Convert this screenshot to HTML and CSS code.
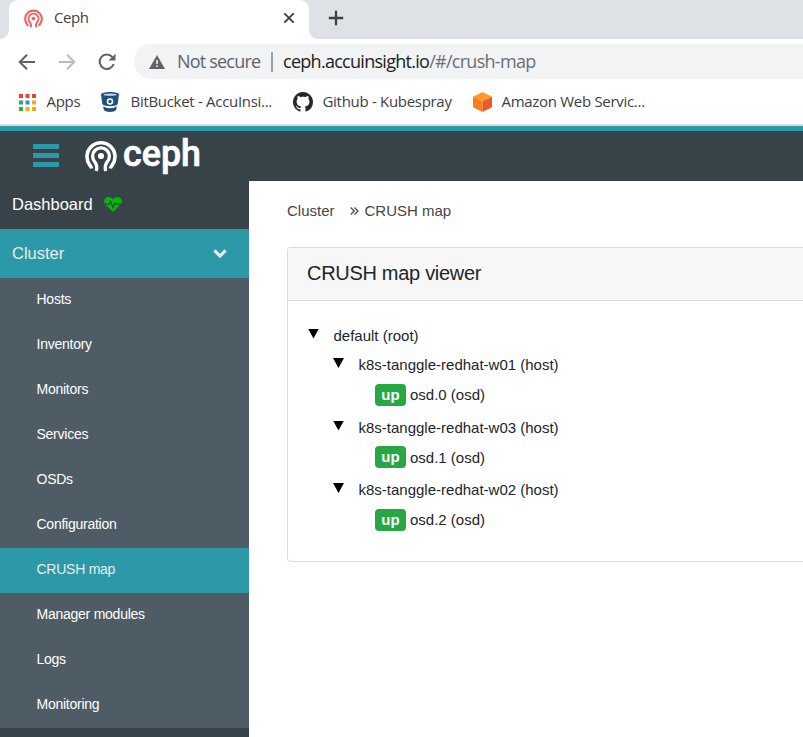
FILE: index.html
```html
<!DOCTYPE html>
<html lang="en">
<head>
<meta charset="utf-8">
<title>Ceph</title>
<link rel="stylesheet" href="styles.css">
</head>
<body>
<svg width="0" height="0" class="defs" aria-hidden="true">
  <symbol id="ceph-mark" viewBox="0 0 32 32">
    <g fill="none" stroke="currentColor" stroke-linecap="butt">
      <path stroke-width="3.600" d="M6.700 28.500C6.500 27.500 5.800 26.400 4.800 25.100A14 14 0 1 1 27.200 25.100C26.200 26.400 25.500 27.500 25.300 28.500"/>
      <path stroke-width="3.300" d="M11.200 31C12.300 28.300 12.200 25.600 9.900 22A8.400 8.400 0 1 1 22.100 22C19.800 25.600 19.700 28.300 20.800 31"/>
    </g>
    <circle cx="16" cy="16" r="3.100" fill="currentColor"/>
  </symbol>
</svg>
<header class="browser">
  <div class="tabs">
    <div class="tab-prev"></div>
    <div class="tab">
      <svg class="favicon" width="19" height="19"><use href="#ceph-mark"/></svg>
      <span class="tab-title">Ceph</span>
      <svg class="close" width="12" height="12" viewBox="0 0 12 12"><path d="M1.300 1.300 10.700 10.700M10.700 1.300 1.300 10.700" stroke="#3c4043" stroke-width="1.900"/></svg>
    </div>
    <div class="tab-rest"><svg width="16" height="16" viewBox="0 0 16 16"><path d="M8 .8V15.200M.8 8H15.200" stroke="#3c4043" stroke-width="2.300"/></svg></div>
  </div>
  <div class="toolbar">
    <svg class="nav-icon" width="18" height="18" viewBox="0 0 18 18" fill="none" stroke="#5f6368" stroke-width="2"><path d="M17 9H2M9 1.700 1.700 9 9 16.300"/></svg>
    <svg class="nav-icon" width="18" height="18" viewBox="0 0 18 18" fill="none" stroke="#babcbe" stroke-width="2"><path d="M1 9H16M9 1.700 16.300 9 9 16.300"/></svg>
    <svg class="nav-icon" width="18" height="18" viewBox="0 0 18 18"><path d="M15.700 11A7.200 7.200 0 1 1 14.300 4" fill="none" stroke="#5f6368" stroke-width="2.100"/><path d="M17.500.7V7.500H10.500Z" fill="#5f6368"/></svg>
    <div class="omnibox">
      <svg width="16" height="14" viewBox="0 0 16 14"><path d="M8 0 16 14H0Z" fill="#5f6368"/><path d="M8 5V9M8 10.300V12" stroke="#f1f3f4" stroke-width="1.600"/></svg>
      <span class="insecure">Not secure</span>
      <span class="sep"></span>
      <span class="url">ceph.accuinsight.io<span class="path">/#/crush-map</span></span>
    </div>
  </div>
  <nav class="bookmarks">
    <svg class="apps-icon" width="17" height="17" viewBox="0 0 17 17"><path fill="#ea4335" d="M0 0h4v4H0zM6.500 0h4v4h-4zM13 0h4v4h-4z"/><path fill="#34a853" d="M0 6.500h4v4H0zM0 13h4v4H0z"/><path fill="#2d8cf0" d="M6.500 6.500h4v4h-4z"/><path fill="#fbaa05" d="M13 6.500h4v4h-4zM6.500 13h4v4h-4zM13 13h4v4h-4z"/></svg>
    <span class="bm-apps">Apps</span>
    <svg class="bucket" width="18" height="20" viewBox="0 0 18 20"><path fill="#205081" d="M0 2.500C0 1 4 0 9 0s9 1 9 2.500L16.700 12C15 15 3 15 1.300 12ZM2.100 14.300c3.500 2.600 10.300 2.600 13.800 0l-.8 3.800c-1.500 2.500-10.700 2.500-12.200 0Z"/><ellipse cx="9" cy="2.700" rx="6.600" ry="1.100" fill="#c9d8e5"/><circle cx="9" cy="9.500" r="2.500" fill="#205081" stroke="#fff" stroke-width="1.600"/></svg>
    <span class="bm-bitbucket">BitBucket - AccuInsi...</span>
    <svg class="github" width="20" height="20" viewBox="0 0 16 16"><path fill="#24292e" d="M8 0C3.580 0 0 3.580 0 8c0 3.540 2.290 6.530 5.470 7.590.4.070.55-.17.55-.38 0-.19-.01-.82-.01-1.490-2.010.37-2.530-.49-2.690-.94-.09-.23-.48-.94-.82-1.130-.28-.15-.68-.52-.01-.53.63-.01 1.080.58 1.230.82.72 1.210 1.870.87 2.330.66.070-.52.28-.87.51-1.070-1.780-.2-3.640-.89-3.640-3.950 0-.87.31-1.590.82-2.150-.08-.2-.36-1.020.08-2.120 0 0 .67-.21 2.200.82.64-.18 1.320-.27 2-.27s1.360.09 2 .27c1.530-1.040 2.200-.82 2.200-.82.44 1.100.16 1.920.08 2.120.51.56.82 1.270.82 2.150 0 3.070-1.870 3.750-3.650 3.950.29.25.54.73.54 1.480 0 1.070-.01 1.930-.01 2.200 0 .21.15.46.55.38A8.010 8.010 0 0 0 16 8c0-4.420-3.580-8-8-8Z"/></svg>
    <span class="bm-github">Github - Kubespray</span>
    <svg class="aws" width="19" height="20" viewBox="0 0 19 20"><path fill="#ff9826" d="M9.500 0 19 4.800 9.500 9.500 0 4.800Z"/><path fill="#fa7e22" d="M0 4.800 9.500 9.500V20L0 15.300Z"/><path fill="#ea5b22" d="M19 4.800 9.500 9.500V20L19 15.300Z"/></svg>
    <span class="bm-aws">Amazon Web Servic...</span>
  </nav>
</header>
<div class="topbar">
  <div class="burger"><i></i><i></i><i></i></div>
  <svg class="brand-mark" width="32" height="32"><use href="#ceph-mark"/></svg>
  <svg class="wordmark" width="82" height="50" viewBox="0 0 82 50"><text x="1" y="34.500" textLength="78" lengthAdjust="spacingAndGlyphs">ceph</text></svg>
</div>
<div class="app">
  <aside class="sidebar">
    <a class="top-item">Dashboard
      <svg width="18" height="15" viewBox="0 0 18 15"><path fill="#0b0" d="M9 15 1.400 7.500C-.5 5.300-.2 2.300 1.600.9 3.700-.6 6.800-.2 9 2.300 11.200-.2 14.300-.6 16.400.9c1.800 1.400 2.100 4.400.2 6.600Z"/><path d="M0 7.200H5L6.500 4.300 9 10.700 11.100 5.800 12.200 7.200H18" fill="none" stroke="#374249" stroke-width="1.200"/></svg>
    </a>
    <a class="top-item open">Cluster
      <svg width="14" height="9" viewBox="0 0 14 9"><path d="M1.400 1.400 7 7 12.600 1.400" fill="none" stroke="#ececec" stroke-width="3.100"/></svg>
    </a>
    <ul class="submenu">
      <li>Hosts</li><li>Inventory</li><li>Monitors</li><li>Services</li><li>OSDs</li><li>Configuration</li><li class="active">CRUSH map</li><li>Manager modules</li><li>Logs</li><li>Monitoring</li>
    </ul>
  </aside>
  <main>
    <div class="breadcrumb"><span>Cluster</span><svg width="9" height="8" viewBox="0 0 9 8"><path d="M.7.5 4.200 4 .7 7.500M4.500.5 8 4 4.500 7.500" fill="none" stroke="#474544" stroke-width="1.200"/></svg><span>CRUSH map</span></div>
    <section class="card">
      <h1>CRUSH map viewer</h1>
      <div class="tree">
        <div class="node root"><i class="caret"></i>default (root)</div>
        <div class="group">
          <div class="node"><i class="caret"></i>k8s-tanggle-redhat-w01 (host)</div>
          <div class="leaf"><b>up</b>osd.0 (osd)</div>
        </div>
        <div class="group">
          <div class="node"><i class="caret"></i>k8s-tanggle-redhat-w03 (host)</div>
          <div class="leaf"><b>up</b>osd.1 (osd)</div>
        </div>
        <div class="group">
          <div class="node"><i class="caret"></i>k8s-tanggle-redhat-w02 (host)</div>
          <div class="leaf"><b>up</b>osd.2 (osd)</div>
        </div>
      </div>
    </section>
  </main>
</div>
</body>
</html>
```
FILE: styles.css
```css
* { box-sizing: border-box; }
body { margin: 0; height: 737px; overflow: hidden; display: flex; flex-direction: column; background: #fff; font-family: "Liberation Sans", Arial, sans-serif; font-size: 15px; color: #212529; }
svg { display: block; flex: none; }
.defs { position: absolute; }
span { white-space: nowrap; }

.browser { height: 126px; flex: none; border-bottom: 2px solid #dadce0; font-family: "Open Sans", "Noto Sans", sans-serif; color: #3c4043; }
.tabs { display: flex; height: 39px; background: #fff; }
.tab-prev { width: 9px; background: #dee1e6; border-bottom-right-radius: 9px; }
.tab { width: 300px; display: flex; align-items: center; padding: 0 14px 3px 15px; background: #fff; border-radius: 9px 9px 0 0; box-shadow: 0 -9px 0 9px #dee1e6; clip-path: inset(0); }
.favicon { color: #f0635f; }
.tab-title { margin-left: 11px; padding-bottom: 2px; flex: 1; font-size: 15px; letter-spacing: -.4px; }
.tab-rest { flex: 1; padding: 10px 0 0 19px; background: #dee1e6; border-bottom-left-radius: 9px; }

.toolbar { display: flex; align-items: center; height: 45px; padding-left: 18px; }
.nav-icon { margin-right: 22px; }
.omnibox { flex: 1; display: flex; align-items: center; height: 35px; margin-left: -4px; padding-left: 15px; border-radius: 18px 0 0 18px; background: #f1f3f4; font-size: 18px; }
.insecure { width: 94px; margin-left: 12px; padding-bottom: 1px; color: #5f6368; letter-spacing: -.8px; }
.sep { width: 2px; height: 20px; margin-right: 10px; background: #9aa0a6; }
.url { padding-bottom: 1px; color: #202124; letter-spacing: -.72px; }
.path { color: #6b6f74; }
.bookmarks { display: flex; align-items: center; height: 36px; padding-left: 18.500px; font-size: 15px; letter-spacing: -.3px; }
.bookmarks span { padding-bottom: 2px; }
.bm-apps { width: 54px; margin-left: 11px; }
.bm-bitbucket { width: 162px; margin-left: 12px; }
.bm-github { width: 150px; margin-left: 10px; }
.bm-aws { margin-left: 10px; }

.topbar { display: flex; align-items: center; flex: none; height: 55px; padding-left: 33px; border-top: 5px solid #2b99a8; background: #374249; }
.burger { display: grid; gap: 4px; width: 26px; margin-top: -1px; }
.burger i { height: 5px; background: #2b99a8; }
.brand-mark { margin-left: 26px; color: #fff; }
.wordmark { margin-left: 5px; }
.wordmark text { font: 500 37px Roboto, sans-serif; fill: #fff; stroke: #fff; stroke-width: .7px; }

.app { display: flex; flex: 1; min-height: 0; }
.sidebar { width: 249px; flex: none; background: #374249; color: #fff; }
.top-item { display: flex; align-items: center; gap: 11px; height: 48px; padding: 0 22px 2px 12px; font-size: 16.500px; }
.open { justify-content: space-between; height: 49px; padding-bottom: 1px; background: #2b99a8; color: #ececec; }
.submenu { margin: 0; padding: 0; list-style: none; background: #4e5c66; font-size: 14px; letter-spacing: -.25px; }
.submenu li { height: 45px; padding: 0 0 3px 36.500px; line-height: 42px; }
.submenu .active { background: #2b99a8; color: #ececec; }

main { flex: 1; padding: 19px 0 0 38px; }
.breadcrumb { display: flex; align-items: center; height: 20px; color: #474544; }
.breadcrumb svg { margin: 1px 6px 0 15px; }
.card { height: 315px; margin-top: 27px; border: 1px solid #dcdcdc; border-right: 0; border-radius: 4px 0 0 4px; }
h1 { height: 53px; margin: 0; padding-left: 19px; border-bottom: 1px solid #dcdcdc; background: #f7f7f7; font-size: 20px; font-weight: 400; line-height: 50px; letter-spacing: -.3px; }
.tree { padding: 19px 0 0 20px; }
.node { display: flex; align-items: center; height: 30px; }
.group .node { height: 29px; }
.caret { width: 11px; height: 10px; margin: -3px 14.500px 0 0; background: #000; clip-path: polygon(0 0, 100% 0, 50% 100%); }
.group { height: 62.500px; padding-left: 25px; }
.leaf { display: flex; align-items: center; height: 31px; padding-left: 42px; }
.leaf b { width: 31px; height: 22px; margin-right: 4px; border-radius: 4px; background: #28a745; color: #fff; font-size: 15px; line-height: 22px; text-align: center; }
```
